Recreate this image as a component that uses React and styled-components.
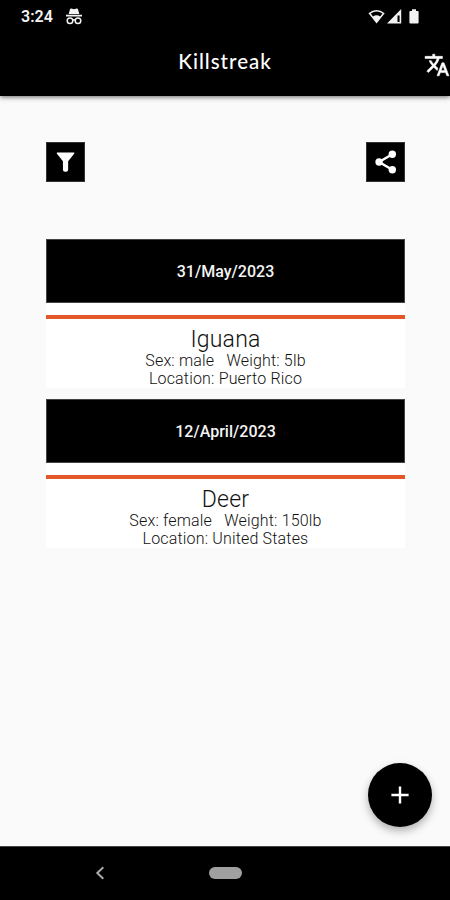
import React from "react";
import styled, { createGlobalStyle } from "styled-components";

const GlobalStyle = createGlobalStyle`
  * { box-sizing: border-box; }
  body { margin: 0; background: #fafafa; }
`;

const Screen = styled.div`
  width: 450px;
  height: 900px;
  display: flex;
  flex-direction: column;
  overflow: hidden;
  background: #fafafa;
  font-family: Roboto, sans-serif;
`;

const Header = styled.header`
  flex: none;
  height: 96px;
  background: #000;
  color: #fff;
  box-shadow: 0 1px 5px rgba(0, 0, 0, 0.6);
`;

const StatusBar = styled.div`
  height: 34px;
  padding: 0 30px 0 21px;
  display: flex;
  align-items: center;
  color: #f2f2f2;
`;

const Clock = styled.span`
  width: 44px;
  font-size: 16px;
  font-weight: 600;
  line-height: 34px;
`;

const StatusIcons = styled.div`
  margin-left: auto;
  display: flex;
  align-items: center;
`;

const TitleBar = styled.div`
  height: 62px;
  display: grid;
  grid-template-columns: 27px 1fr 27px;
  align-items: center;
`;

const Title = styled.h1`
  grid-column: 2;
  margin: 0;
  padding-bottom: 8px;
  text-align: center;
  font-family: Lato, sans-serif;
  font-size: 20.5px;
  font-weight: 500;
  line-height: 24px;
  letter-spacing: 1px;
`;

const BarButton = styled.button`
  border: 0;
  padding: 0 0 0 1px;
  background: none;
  color: #fff;
  display: flex;
`;

const Content = styled.main`
  flex: 1;
  display: flex;
  flex-direction: column;
  padding: 46px 45px 19px 46px;
`;

const Actions = styled.div`
  display: flex;
  justify-content: space-between;
  margin-bottom: 57px;
`;

const SquareButton = styled.button`
  width: 39px;
  height: 40px;
  padding: 0;
  border: 1px solid #333;
  background: #000;
  color: #fff;
  display: flex;
  align-items: center;
  justify-content: center;
`;

const Entry = styled.section`
  height: 149px;
  margin-bottom: 11px;
  background: #fff;
  text-align: center;
`;

const DateHeading = styled.h2`
  margin: 0 0 12px;
  height: 64px;
  border: 1px solid #444;
  background: #000;
  color: #f4f4f4;
  font-size: 16px;
  font-weight: 500;
  line-height: 63px;
  letter-spacing: 0.03px;
`;

const Details = styled.div`
  border-top: 4px solid #e45828;
  padding-top: 8px;
  color: #111;
`;

const Species = styled.h3`
  margin: 0;
  font-size: 23px;
  font-weight: 300;
  line-height: 25px;
  letter-spacing: 0.2px;
`;

const Line = styled.p`
  margin: 0;
  font-size: 16px;
  font-weight: 300;
  line-height: 18px;
  letter-spacing: 0.17px;
  white-space: pre;
`;

const AddButton = styled.button`
  width: 64px;
  height: 64px;
  margin: auto -27px 0 auto;
  padding: 0;
  flex: none;
  border: 0;
  border-radius: 50%;
  background: #000;
  color: #fff;
  display: flex;
  align-items: center;
  justify-content: center;
  box-shadow: 0 4px 9px rgba(0, 0, 0, 0.3);
`;

const NavigationBar = styled.nav`
  flex: none;
  height: 54px;
  background: #000;
  border-top: 1px solid #444;
  padding: 0 0 1px 95px;
  display: flex;
  align-items: center;
`;

const HomePill = styled.span`
  width: 33px;
  height: 12px;
  margin-left: 104px;
  border-radius: 6px;
  background: #a0a0a0;
`;

const Incognito = () => (
  <svg width="18" height="18" viewBox="0 0 18 18" fill="currentColor">
    <path d="M5 1.2Q5.3.4 6.2.6L9 1.2L11.8.6Q12.7.4 13 1.2L14.3 6H3.7ZM1 6.8H17V8.6H1Z" />
    <g fill="none" stroke="currentColor" strokeWidth="1.5">
      <circle cx="5" cy="12.7" r="2.8" />
      <circle cx="13" cy="12.7" r="2.8" />
      <path d="M7.7 12.2Q9 11.2 10.3 12.2" />
    </g>
  </svg>
);

const Signals = () => (
  <svg width="52" height="18" viewBox="0 0 52 18" fill="currentColor">
    <path fillRule="evenodd" d="M0.5 5.2Q8.5-1.4 16.7 5.2L8.6 15.6ZM2.7 5.5L5 8.4Q8.6 6.3 12.2 8.4L14.5 5.5Q8.6 1.5 2.7 5.5Z" />
    <path fillRule="evenodd" d="M19 15.5L33.2 1V15.5ZM29.5 7.6V14H31.6V7.6Z" />
    <path d="M44 1.3h4v1.6h1.6q1 0 1 1v10.6q0 1-1 1h-7.2q-1 0-1-1V3.9q0-1 1-1H44Z" />
  </svg>
);

const Translate = () => (
  <svg width="26" height="26" viewBox="0 0 24 24" fill="currentColor" stroke="currentColor" strokeWidth="0.5">
    <path d="m12.87 15.07-2.54-2.51.03-.03c1.74-1.94 2.98-4.17 3.71-6.53H17V4h-7V2H8v2H1v1.99h11.17C11.5 7.92 10.44 9.75 9 11.35 8.07 10.32 7.3 9.19 6.69 8h-2c.73 1.63 1.73 3.17 2.98 4.56l-5.09 5.02L4 19l5-5 3.11 3.11zM18.5 10h-2L12 22h2l1.12-3h4.75L21 22h2zm-2.62 7 1.62-4.33L19.12 17z" />
  </svg>
);

const Filter = () => (
  <svg width="39" height="38" viewBox="0 0 39 38" fill="currentColor">
    <path d="M11 9H28.2Q29.3 9 28.8 10L22.3 18.2V27.2Q22.3 29.4 20 29.4H19Q16.8 29.4 16.8 27.2V18.2L10.3 10Q9.9 9 11 9Z" />
  </svg>
);

const Share = () => (
  <svg width="38" height="38" viewBox="0 0 38 38" fill="currentColor">
    <path d="M26 11L12.4 19L26 27" fill="none" stroke="currentColor" strokeWidth="2.5" />
    <circle cx="26" cy="11" r="3.8" />
    <circle cx="12.4" cy="19" r="3.8" />
    <circle cx="26" cy="27" r="3.8" />
  </svg>
);

const entries = [
  {
    date: "31/May/2023",
    name: "Iguana",
    summary: "Sex: male   Weight: 5lb",
    location: "Location: Puerto Rico",
  },
  {
    date: "12/April/2023",
    name: "Deer",
    summary: "Sex: female   Weight: 150lb",
    location: "Location: United States",
  },
];

export default function App() {
  return (
    <Screen>
      <GlobalStyle />
      <Header>
        <StatusBar>
          <Clock>3:24</Clock>
          <Incognito />
          <StatusIcons>
            <Signals />
          </StatusIcons>
        </StatusBar>
        <TitleBar>
          <Title>Killstreak</Title>
          <BarButton aria-label="Language">
            <Translate />
          </BarButton>
        </TitleBar>
      </Header>
      <Content>
        <Actions>
          <SquareButton aria-label="Filter">
            <Filter />
          </SquareButton>
          <SquareButton aria-label="Share">
            <Share />
          </SquareButton>
        </Actions>
        {entries.map((entry) => (
          <Entry key={entry.date}>
            <DateHeading>{entry.date}</DateHeading>
            <Details>
              <Species>{entry.name}</Species>
              <Line>{entry.summary}</Line>
              <Line>{entry.location}</Line>
            </Details>
          </Entry>
        ))}
        <AddButton aria-label="Add">
          <svg width="18" height="18" viewBox="0 0 18 18" stroke="currentColor" strokeWidth="2.4">
            <path d="M9 .4V17.6M.4 9H17.6" />
          </svg>
        </AddButton>
      </Content>
      <NavigationBar>
        <svg width="10" height="14" viewBox="0 0 10 14" fill="none" stroke="#aaa" strokeWidth="2">
          <path d="M8.3 1.3L2.3 7L8.3 12.7" />
        </svg>
        <HomePill />
      </NavigationBar>
    </Screen>
  );
}
